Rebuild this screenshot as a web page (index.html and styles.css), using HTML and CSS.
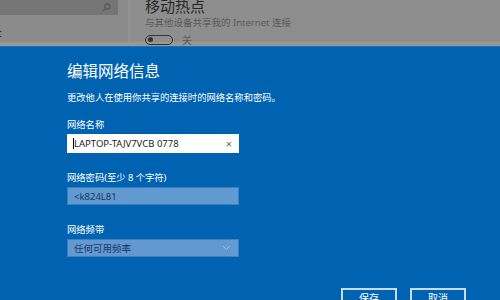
FILE: index.html
```html
<!DOCTYPE html>
<html>
  <head>
    <meta charset="UTF-8">
    <title>编辑网络信息</title>
    <link rel="stylesheet" href="styles.css">
  </head>
  <body>
    <div class="backdrop">
      <div class="side">
        <div class="search">
          <svg width="9" height="9" viewBox="0 0 10 10"><circle cx="6" cy="4" r="3" fill="none" stroke="#555" stroke-width="1.2"/><line x1="3.8" y1="6.2" x2="1" y2="9" stroke="#555" stroke-width="1.2"/></svg>
        </div>
        <div class="side-item">t</div>
      </div>
      <div class="main">
        <div class="main-title">移动热点</div>
        <div class="main-sub">与其他设备共享我的 Internet 连接</div>
        <div class="toggle-row">
          <span class="toggle"><span class="knob"></span></span>
          <span>关</span>
        </div>
      </div>
    </div>
    <div class="dialog">
      <h1 class="dialog-title">编辑网络信息</h1>
      <p class="dialog-desc">更改他人在使用你共享的连接时的网络名称和密码。</p>

      <label class="field-label">网络名称</label>
      <div class="field field-active">
        <span class="caret"></span>
        <span class="field-text">LAPTOP-TAJV7VCB 0778</span>
        <span class="clear">×</span>
      </div>

      <label class="field-label">网络密码(至少 8 个字符)</label>
      <div class="field">
        <span class="field-text">&lt;k824L81</span>
      </div>

      <label class="field-label">网络频带</label>
      <div class="field">
        <span class="field-text">任何可用频率</span>
        <svg class="chevron" width="9" height="6" viewBox="0 0 9 6"><polyline points="1,1 4.5,4.5 8,1" fill="none" stroke="#9cbde0" stroke-width="1"/></svg>
      </div>

      <div class="buttons">
        <button class="btn">保存</button>
        <button class="btn">取消</button>
      </div>
    </div>
  </body>
</html>
```

FILE: styles.css
```css
body {
  margin: 0;
  width: 500px;
  height: 300px;
  overflow: hidden;
  font-family: "Noto Sans", "Noto Sans CJK SC", sans-serif;
  background-color: #0063b1;
}

.backdrop {
  display: flex;
  height: 42px;
  background-color: #8e8e8e;
  border-bottom: 4px solid #999693;
}

.side {
  width: 128px;
  background-color: #8b8b8b;
  border-right: 2px solid #939393;
}

.search {
  width: 118px;
  height: 15px;
  background-color: #757575;
  display: flex;
  align-items: center;
  justify-content: flex-end;
  box-sizing: border-box;
  padding-right: 7px;
}

.side-item {
  margin-top: 11px;
  font-size: 10px;
  line-height: 14px;
  color: #1e1e1e;
  margin-left: -2px;
}

.main {
  padding-left: 15px;
}

.main-title {
  font-size: 15px;
  line-height: 18px;
  margin-top: -3px;
  color: #262626;
}

.main-sub {
  font-size: 9.5px;
  line-height: 13px;
  color: #5a5a5a;
  margin-top: 1px;
}

.toggle-row {
  display: flex;
  align-items: center;
  gap: 9px;
  margin-top: 3px;
  font-size: 10px;
  color: #5a5a5a;
}

.toggle {
  width: 24px;
  height: 8px;
  border: 1.5px solid #333;
  border-radius: 6px;
  display: flex;
  align-items: center;
  padding-left: 2px;
}

.knob {
  width: 5px;
  height: 5px;
  border-radius: 50%;
  background-color: #333;
}

.dialog {
  padding: 14px 0 0 67px;
  border-top: 1px solid #1a72bd;
  color: #fff;
}

.dialog-title {
  margin: 0;
  font-size: 15.5px;
  line-height: 20px;
  font-weight: normal;
}

.dialog-desc {
  margin: 10px 0 0;
  font-size: 9.3px;
  line-height: 14px;
}

.field-label {
  display: block;
  margin-top: 13px;
  font-size: 9.3px;
  line-height: 14px;
}

.field-label + .field {
  margin-top: 2px;
}

.field + .field-label {
  margin-top: 18px;
}

.field {
  width: 172px;
  height: 18px;
  box-sizing: border-box;
  display: flex;
  align-items: center;
  padding: 0 6px;
  background-color: #6199d0;
  border: 1px solid #3d81c3;
  color: #183a5e;
  font-size: 9.5px;
}

.field-active {
  height: 19px;
  background-color: #fff;
  border-color: #fff;
  color: #222;
}

.caret {
  width: 1px;
  height: 11px;
  background-color: #000;
  margin-left: -1px;
}

.field-text {
  flex: 1;
}

.clear {
  font-size: 11px;
  color: #666;
}

.chevron {
  margin-right: 1px;
}

.buttons {
  display: flex;
  justify-content: flex-end;
  gap: 13px;
  margin-top: 31px;
  padding-right: 34px;
}

.btn {
  width: 56px;
  height: 24px;
  background-color: #0063b1;
  border: 2px solid #c8dcf0;
  color: #fff;
  font-family: "Noto Sans CJK SC", sans-serif;
  font-size: 10px;
  padding: 0 0 8px;
}
```
